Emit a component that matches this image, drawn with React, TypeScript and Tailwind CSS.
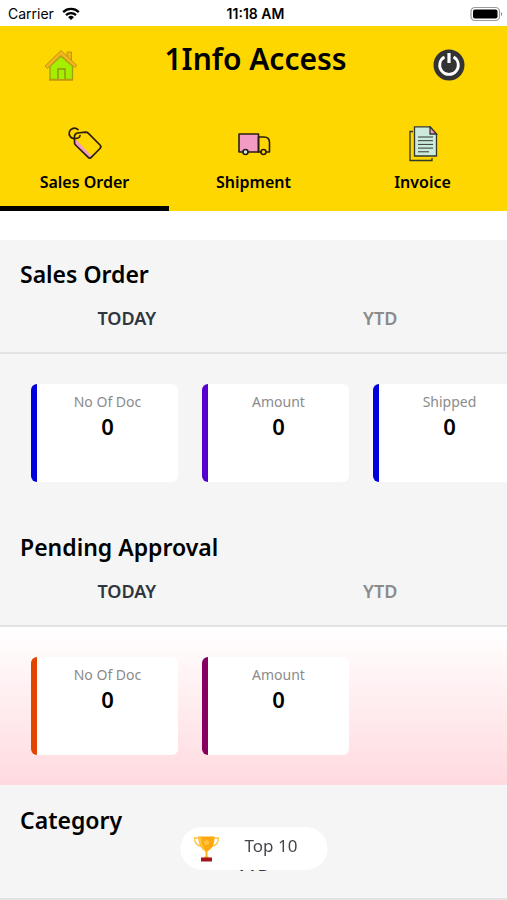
import { useState } from "react";

type Metric = { label: string; value: number; accent: string };

const salesMetrics: Metric[] = [
  { label: "No Of Doc", value: 0, accent: "border-l-[#0000dc]" },
  { label: "Amount", value: 0, accent: "border-l-[#5500cd]" },
  { label: "Shipped", value: 0, accent: "border-l-[#0000dc]" },
];

const pendingMetrics: Metric[] = [
  { label: "No Of Doc", value: 0, accent: "border-l-[#e14600]" },
  { label: "Amount", value: 0, accent: "border-l-[#87005f]" },
];

function WifiIcon() {
  return (
    <svg width="18" height="14" viewBox="0 0 18 14" fill="none" stroke="#000" strokeWidth="2.3" aria-hidden="true">
      <path d="M1.2 5.1C5.5.9 12.5.9 16.8 5.1" />
      <path d="M4 8.2c2.8-2.7 7.2-2.7 10 0" />
      <path d="M9 13 6.1 10.2a4.2 4.2 0 0 1 5.8 0Z" fill="#000" stroke="none" />
    </svg>
  );
}

function BatteryIcon() {
  return (
    <svg width="33" height="16" viewBox="0 0 33 16" aria-hidden="true">
      <rect x="1" y="1.5" width="28.5" height="13" rx="4" fill="#fff" stroke="#9b9b9b" strokeWidth="1.2" />
      <rect x="3" y="3.5" width="24.5" height="9" rx="2" fill="#000" />
      <path d="M31 6v4c1.3-.5 1.3-3.5 0-4Z" fill="#777" />
    </svg>
  );
}

function HomeIcon() {
  return (
    <svg width="34" height="34" viewBox="0 0 34 34" aria-hidden="true">
      <path d="M23 10V3h4.500v11Z" fill="#eeb41c" stroke="#c2960f" />
      <path d="M6 17 17 7l11.500 10v13.500H6Z" fill="#a6ee00" stroke="#9aa010" strokeWidth="1.300" />
      <path d="M1 17 17 1.500 33 16.500l-2.500 2L17 6.500 3.500 19.500Z" fill="#f0b41e" stroke="#c2960f" strokeLinejoin="round" />
      <path d="M14 30V20h7v10" fill="#a6ee00" stroke="#8f9a10" strokeWidth="1.500" />
      <path d="M5 31h24" stroke="#c79a10" strokeWidth="1.500" />
    </svg>
  );
}

function PowerIcon() {
  return (
    <svg width="32" height="32" viewBox="0 0 32 32" fill="none" aria-hidden="true">
      <circle cx="16" cy="16" r="15.500" fill="#333" />
      <path d="M11.500 8A9.300 9.300 0 1 0 20.500 8" stroke="#fff" strokeWidth="2.800" />
      <path d="M16 4v10" stroke="#fff" strokeWidth="3.200" />
    </svg>
  );
}

function TagIcon() {
  return (
    <svg width="36" height="36" viewBox="0 0 36 36" fill="none" stroke="#2b1c10" strokeWidth="1.700" strokeLinejoin="round" strokeLinecap="round" aria-hidden="true">
      <path d="M7.500 12v6L21 31.500c1 .8 2 .8 3 0l1-1Z" fill="#f29cc4" stroke="none" />
      <path d="M7.500 10.500c0-2 1-3 3-3.500l8-.8c1 0 2 .3 2.700 1L33 19c1.200 1.200 1.200 2.300 0 3.500l-8.500 8.700c-1.200 1.200-2.300 1.200-3.500 0L8.500 19c-.7-.7-1-1.500-1-2.500Z" />
      <path d="M11 3.700A5.200 5.200 0 1 0 8.300 12.500c3 0 4.500-1.500 4.700-3" />
    </svg>
  );
}

function TruckIcon() {
  return (
    <svg width="36" height="36" viewBox="0 0 36 36" fill="none" stroke="#2b1c10" strokeWidth="1.600" strokeLinejoin="round" aria-hidden="true">
      <rect x="3" y="8" width="19.500" height="18" fill="#f29cc4" />
      <path d="M22.500 11h5.500c3.500 0 5.500 2 5.500 5.500V26h-11Z" />
      <circle cx="9.500" cy="26" r="2.500" fill="#cdeee8" />
      <circle cx="27.500" cy="26" r="2.500" fill="#ffd700" />
    </svg>
  );
}

function InvoiceIcon() {
  return (
    <svg width="36" height="36" viewBox="0 0 36 36" fill="none" stroke="#33382d" strokeWidth="1.300" aria-hidden="true">
      <path d="M8 5.500H5V34.500h22V32" />
      <path d="M9.500.8h15.500L31.500 8v22h-22Z" fill="#ccebdd" />
      <path d="M25 .8V8h6.500Z" fill="#f29cc4" />
      <path d="M13 11h15M13 14.700h15M13 18.400h15M13 22.100h15M13 25.800h11" strokeWidth="1" />
    </svg>
  );
}

function TrophyIcon() {
  return (
    <svg width="26" height="26" viewBox="0 0 26 26" fill="none" aria-hidden="true">
      <path d="M6 2H1c0 5 2 7.500 7 8.500M20 2h5c0 5-2 7.500-7 8.500" stroke="#ffc43d" strokeWidth="1.400" />
      <path d="M5 .5h16c0 7-1.500 12-8 15.500C6.500 12.500 5 7.500 5 .5Z" fill="#ffa80f" />
      <path d="M5 .5h3c0 6 1 10.500 5 15.500C6.500 12.500 5 7.500 5 .5Z" fill="#ffc43d" />
      <circle cx="13" cy="6.500" r="2.500" fill="#ffc43d" />
      <path d="M12 15h2v5l2 2h-6l2-2Z" fill="#ffb31a" />
      <path d="M7.500 21.500h11v4h-11Z" fill="#a3151b" />
    </svg>
  );
}

const navItems = [
  { name: "Sales Order", Icon: TagIcon },
  { name: "Shipment", Icon: TruckIcon },
  { name: "Invoice", Icon: InvoiceIcon },
];

function PeriodTabs({ periods }: { periods: string[] }) {
  const [period, setPeriod] = useState(periods[0]);
  return (
    <div className="flex border-b-2 border-[#e2e3e5]">
      {periods.map((name) => (
        <button
          key={name}
          type="button"
          onClick={() => setPeriod(name)}
          className={`flex-1 pt-4 pb-5 text-lg leading-7 font-semibold ${period === name ? "text-[#2f3640]" : "text-[#8b8b8b]"}`}
        >
          {name}
        </button>
      ))}
    </div>
  );
}

function MetricRow({ metrics }: { metrics: Metric[] }) {
  return (
    <div className="flex gap-6 overflow-hidden py-[30px] pl-[31px]">
      {metrics.map(({ label, value, accent }) => (
        <article key={label} className={`h-[98px] w-[147px] shrink-0 rounded-md border-l-6 bg-white pt-2 text-center ${accent}`}>
          <h3 className="text-sm leading-5 text-[#8b8b8b]">{label}</h3>
          <p className="text-[22px] leading-7 font-semibold text-black">{value}</p>
        </article>
      ))}
    </div>
  );
}

function SectionTitle({ children }: { children: string }) {
  return <h2 className="px-5 pt-5 text-[23px] leading-7 font-semibold text-black">{children}</h2>;
}

export default function App() {
  const [active, setActive] = useState("Sales Order");
  return (
    <div className="min-h-screen bg-[#f5f5f5] font-['Noto_Sans',sans-serif]">
      <div className="grid h-[26px] grid-cols-3 items-center bg-white pt-px pr-1 pl-2 font-[Inter,sans-serif] text-sm text-black">
        <div className="flex items-center gap-2">
          <span>Carrier</span>
          <WifiIcon />
        </div>
        <span className="text-center font-semibold">11:18 AM</span>
        <div className="flex justify-end">
          <BatteryIcon />
        </div>
      </div>

      <header className="bg-[#ffd700]">
        <div className="flex h-[90px] items-start justify-between pr-[42px] pl-11">
          <button type="button" aria-label="Home" className="mt-[23px]">
            <HomeIcon />
          </button>
          <h1 className="mt-[13px] text-[30px] leading-10 font-semibold text-black">1Info Access</h1>
          <button type="button" aria-label="Log out" className="mt-[23px]">
            <PowerIcon />
          </button>
        </div>
        <nav className="grid grid-cols-3">
          {navItems.map(({ name, Icon }) => (
            <button
              key={name}
              type="button"
              onClick={() => setActive(name)}
              className={`flex flex-col items-center border-b-5 pt-[10px] pb-3 ${active === name ? "border-black" : "border-transparent"}`}
            >
              <Icon />
              <span className="mt-2 text-base leading-6 font-semibold text-black">{name}</span>
            </button>
          ))}
        </nav>
      </header>

      <main className="border-t-[29px] border-white">
        <section>
          <SectionTitle>Sales Order</SectionTitle>
          <PeriodTabs periods={["TODAY", "YTD"]} />
          <MetricRow metrics={salesMetrics} />
        </section>
        <section className="pt-px">
          <SectionTitle>Pending Approval</SectionTitle>
          <PeriodTabs periods={["TODAY", "YTD"]} />
          <div className="bg-linear-to-b from-white to-[#ffdadf]">
            <MetricRow metrics={pendingMetrics} />
          </div>
        </section>
        <section className="pt-px">
          <SectionTitle>Category</SectionTitle>
          <PeriodTabs periods={["YTD"]} />
        </section>
      </main>

      <button
        type="button"
        className="fixed bottom-[30px] left-1/2 flex h-[43px] w-[147px] -translate-x-1/2 items-center rounded-full bg-white pl-[13px] text-[17px] text-[#44484d]"
      >
        <TrophyIcon />
        <span className="grow pr-1 pb-1.5 text-center">Top 10</span>
      </button>
    </div>
  );
}
